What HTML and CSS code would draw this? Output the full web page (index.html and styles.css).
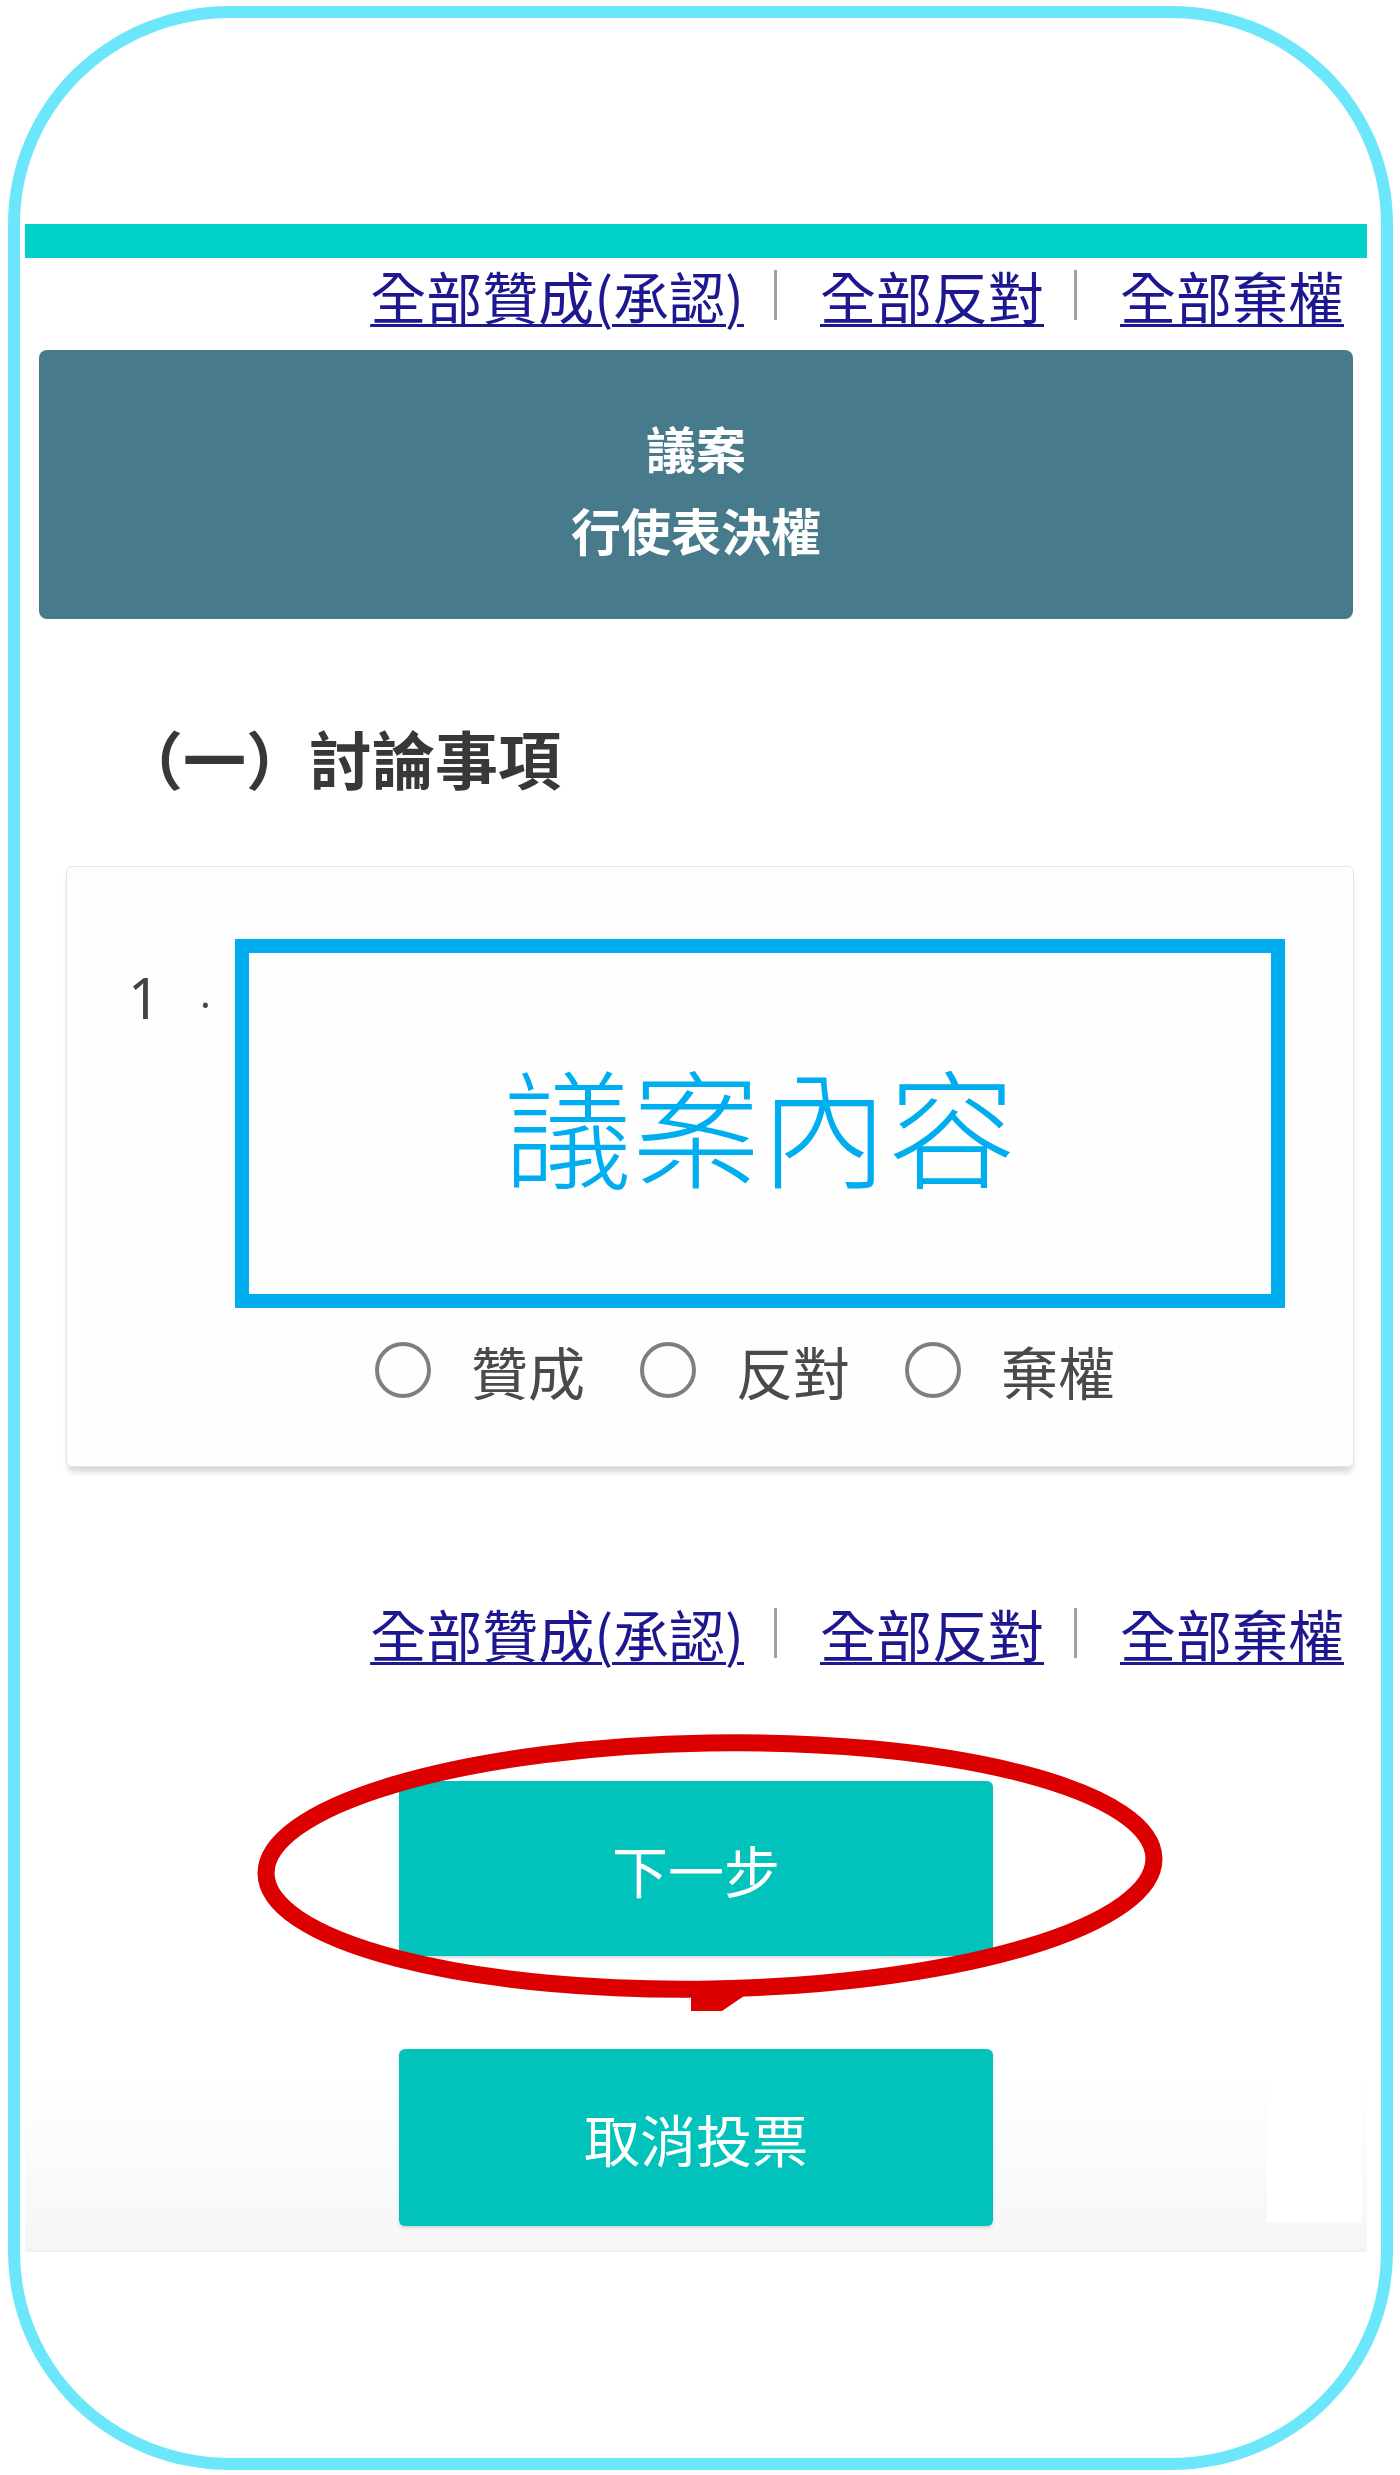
FILE: index.html
```html
<!DOCTYPE html>
<html lang="zh-Hant">
<head>
<meta charset="utf-8">
<title>議案 行使表決權</title>
<link rel="stylesheet" href="styles.css">
</head>
<body>
<div class="frame">
  <div class="screen">
    <div class="top-bar"></div>

    <div class="bulk-links">
      <a href="#" class="bulk">全部贊成(承認)</a><span class="sep"></span><a href="#" class="bulk">全部反對</a><span class="sep"></span><a href="#" class="bulk">全部棄權</a>
    </div>

    <div class="agenda-head">
      <div>議案</div>
      <div>行使表決權</div>
    </div>

    <h2 class="section-title">（一）討論事項</h2>

    <div class="proposal-card">
      <div class="proposal-row">
        <div class="num-col"><span class="num">1</span><span class="dot">·</span></div>
        <div class="content-box">議案內容</div>
      </div>
      <div class="votes">
        <label class="opt"><span class="radio"></span><span class="opt-label">贊成</span></label>
        <label class="opt"><span class="radio"></span><span class="opt-label">反對</span></label>
        <label class="opt"><span class="radio"></span><span class="opt-label">棄權</span></label>
      </div>
    </div>

    <div class="bulk-links bottom">
      <a href="#" class="bulk">全部贊成(承認)</a><span class="sep"></span><a href="#" class="bulk">全部反對</a><span class="sep"></span><a href="#" class="bulk">全部棄權</a>
    </div>

    <div class="actions">
      <svg class="circle-mark" width="940" height="310" viewBox="0 0 940 310" aria-hidden="true">
        <ellipse cx="470" cy="147" rx="444" ry="123" transform="rotate(-1 470 147)" fill="none" stroke="#dc0000" stroke-width="17"/>
        <polygon points="451,268 451,292 482,292 523,264" fill="#dc0000"/>
      </svg>
      <button class="btn">下一步</button>
      <button class="btn second">取消投票</button>
    </div>
  </div>
</div>
</body>
</html>
```

FILE: styles.css
```css
html, body {
  margin: 0;
  padding: 0;
  background: #ffffff;
}

body {
  width: 1400px;
  height: 2475px;
  font-family: "Noto Sans CJK TC", "Noto Sans", sans-serif;
}

.frame {
  box-sizing: border-box;
  margin: 6px 0 0 8px;
  width: 1385px;
  height: 2464px;
  border: 12px solid #6ce6fa;
  border-radius: 222px / 218px;
}

.screen {
  margin: 206px 0 0 5px;
  width: 1342px;
  padding-bottom: 26px;
  background:
    linear-gradient(#ffffff, #ffffff) no-repeat right 5px bottom 30px / 95px 146px,
    linear-gradient(to bottom, #ffffff calc(100% - 176px), #f6f6f6 calc(100% - 4px), #eeeeee 100%);
}

.top-bar {
  height: 34px;
  background: #00d1c9;
}

.bulk-links {
  display: flex;
  justify-content: flex-end;
  align-items: center;
  height: 57px;
  padding: 8px 23px 27px 0;
  font-size: 56px;
  line-height: 57px;
}

.bulk-links.bottom {
  margin-top: 129px;
}

.bulk {
  color: #1d1790;
  text-decoration: underline;
  text-decoration-thickness: 3px;
  text-underline-offset: 5px;
  white-space: nowrap;
}

.sep {
  width: 3px;
  height: 50px;
  background: #a0a0a0;
  margin: 0 43px 0 30px;
}

.agenda-head {
  box-sizing: border-box;
  margin: 0 14px;
  height: 269px;
  padding-top: 56px;
  background: #477b8b;
  border-radius: 8px;
  color: #ffffff;
  font-size: 50px;
  font-weight: 700;
  line-height: 82px;
  text-align: center;
}

.section-title {
  margin: 106px 0 78px 95px;
  font-size: 63px;
  line-height: 63px;
  font-weight: 700;
  color: #383838;
}

.proposal-card {
  margin: 0 13px 0 41px;
  padding: 72px 0 67px 61px;
  background: #fefefe;
  border: 1px solid #e4e4e4;
  border-radius: 6px;
  box-shadow: 0 7px 6px -2px rgba(0, 0, 0, 0.16);
}

.proposal-row {
  display: flex;
  align-items: flex-start;
}

.num-col {
  width: 107px;
  margin-top: 30px;
  font-family: "Noto Sans", "Open Sans", sans-serif;
  font-size: 56px;
  line-height: 56px;
  color: #444444;
  white-space: nowrap;
}

.dot {
  margin-left: 40px;
  font-size: 40px;
}

.content-box {
  box-sizing: border-box;
  width: 1050px;
  height: 369px;
  border: 14px solid #00aeef;
  display: flex;
  align-items: center;
  justify-content: center;
  font-size: 128px;
  line-height: 128px;
  color: #00aeef;
  font-weight: 300;
}

.votes {
  display: flex;
  align-items: center;
  margin-top: 33px;
  padding-left: 247px;
  height: 58px;
}

.opt {
  display: flex;
  align-items: center;
}

.opt + .opt {
  margin-left: 55px;
}

.radio {
  box-sizing: border-box;
  width: 56px;
  height: 56px;
  border: 4px solid #7f7f7f;
  border-radius: 50%;
}

.opt-label {
  margin-left: 40px;
  font-size: 57px;
  line-height: 58px;
  color: #4a4a4a;
}

.actions {
  position: relative;
  margin-top: 93px;
  display: flex;
  flex-direction: column;
  align-items: center;
  gap: 93px;
}

.circle-mark {
  position: absolute;
  left: 215px;
  top: -62px;
  overflow: visible;
  pointer-events: none;
  z-index: 2;
}

.btn {
  width: 594px;
  height: 175px;
  border: none;
  border-radius: 6px;
  background: #02c3bb;
  color: #ffffff;
  font-family: "Noto Sans CJK TC", "Noto Sans", sans-serif;
  font-size: 56px;
  font-weight: 400;
  box-shadow: 0 2px 3px rgba(0, 0, 0, 0.15);
  padding: 0;
}

.btn.second {
  height: 177px;
}
```
